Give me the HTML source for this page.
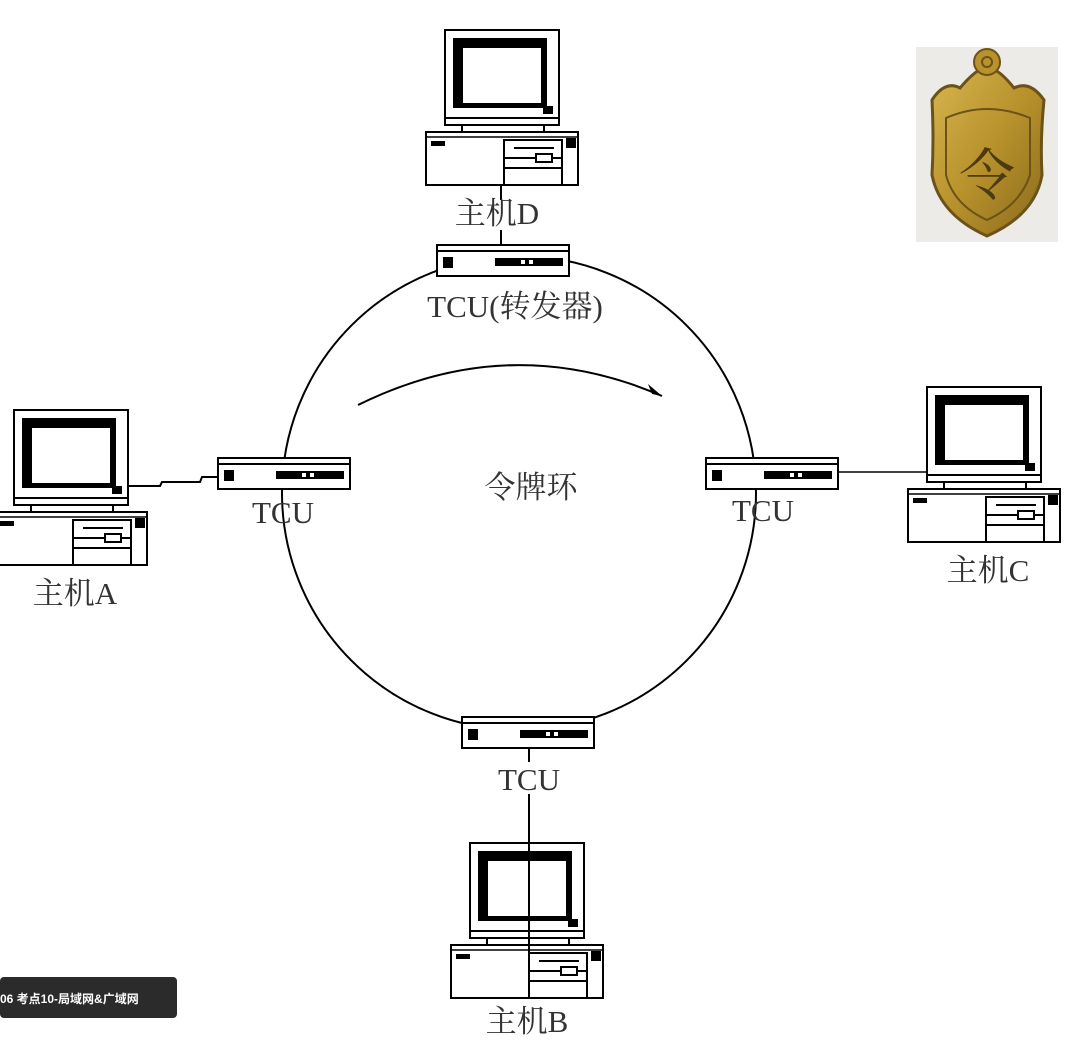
<!DOCTYPE html>
<html><head><meta charset="utf-8"><style>
html,body{margin:0;padding:0;background:#fff;width:1090px;height:1056px;overflow:hidden}
.t{font-family:"Liberation Serif","Noto Serif CJK SC",serif;fill:#333}
</style></head><body>
<svg width="1090" height="1056" viewBox="0 0 1090 1056" xmlns="http://www.w3.org/2000/svg">
<defs>
<linearGradient id="gold" x1="0" y1="0" x2="1" y2="1">
<stop offset="0" stop-color="#d8b650"/><stop offset="0.5" stop-color="#b8922c"/><stop offset="1" stop-color="#8a6a1c"/>
</linearGradient>
<g id="pc" stroke="#000" fill="#fff">
<rect x="19" y="0" width="114" height="88" stroke-width="2"/>
<rect x="27" y="8" width="94" height="70" fill="#000" stroke="none"/>
<rect x="37" y="18" width="78" height="55" fill="#fff" stroke="none"/>
<rect x="117" y="76" width="10" height="8" fill="#000" stroke="none"/>
<rect x="19" y="88" width="114" height="7" stroke-width="2"/>
<line x1="36" y1="95" x2="36" y2="102" stroke-width="2"/>
<line x1="118" y1="95" x2="118" y2="102" stroke-width="2"/>
<rect x="0" y="102" width="152" height="53" stroke-width="2"/>
<line x1="0" y1="107" x2="152" y2="107" stroke-width="1.5"/>
<rect x="5" y="111" width="14" height="5" fill="#000" stroke="none"/>
<rect x="78" y="110" width="58" height="45" stroke-width="2"/>
<line x1="88" y1="118" x2="128" y2="118" stroke-width="2"/>
<line x1="78" y1="128" x2="136" y2="128" stroke-width="2"/>
<rect x="110" y="124" width="16" height="8" stroke-width="2"/>
<line x1="78" y1="138" x2="136" y2="138" stroke-width="2"/>
<rect x="140" y="108" width="10" height="10" fill="#000" stroke="none"/>
</g>
<g id="tcu" stroke="#000" fill="#fff">
<rect x="0" y="0" width="132" height="31" stroke-width="2"/>
<line x1="0" y1="6" x2="132" y2="6" stroke-width="2"/>
<rect x="6" y="12" width="10" height="11" fill="#000" stroke="none"/>
<rect x="58" y="13" width="68" height="8" fill="#000" stroke="none"/>
<rect x="84" y="15" width="4" height="4" fill="#fff" stroke="none"/>
<rect x="92" y="15" width="4" height="4" fill="#fff" stroke="none"/>
</g>
</defs>
<circle cx="519" cy="493" r="237" fill="none" stroke="#000" stroke-width="2"/>
<path d="M358 405 Q510 330 662 396" fill="none" stroke="#000" stroke-width="2"/>
<path d="M662 396 L648 384 L652 394 Z" fill="#000"/>
<line x1="501" y1="185" x2="501" y2="245" stroke="#000" stroke-width="2"/>
<path d="M125 486 L160 486 L162 482 L200 482 L202 477 L230 477" fill="none" stroke="#000" stroke-width="2"/>
<line x1="838" y1="472" x2="930" y2="472" stroke="#000" stroke-width="1.5"/>
<use href="#pc" transform="translate(426,30)"/>
<use href="#pc" transform="translate(908,387)"/>
<use href="#pc" transform="translate(-5,410)"/>
<use href="#pc" transform="translate(451,843)"/>
<use href="#tcu" transform="translate(437,245)"/>
<use href="#tcu" transform="translate(218,458)"/>
<use href="#tcu" transform="translate(706,458)"/>
<use href="#tcu" transform="translate(462,717)"/>
<line x1="529" y1="748" x2="529" y2="995" stroke="#000" stroke-width="2"/>
<rect x="490" y="200" width="22" height="30" fill="#fff"/>
<rect x="500" y="762" width="58" height="32" fill="#fff"/>
<text class="t" x="497" y="224" font-size="31" text-anchor="middle">主机D</text>
<text class="t" x="515" y="317" font-size="31" text-anchor="middle">TCU(转发器)</text>
<text class="t" x="283" y="523" font-size="31" text-anchor="middle">TCU</text>
<text class="t" x="763" y="521" font-size="31" text-anchor="middle">TCU</text>
<text class="t" x="529" y="790" font-size="31" text-anchor="middle">TCU</text>
<text class="t" x="531" y="498" font-size="31" text-anchor="middle">令牌环</text>
<text class="t" x="75" y="604" font-size="31" text-anchor="middle">主机A</text>
<text class="t" x="988" y="581" font-size="31" text-anchor="middle">主机C</text>
<text class="t" x="527" y="1032" font-size="31" text-anchor="middle">主机B</text>
<rect x="916" y="47" width="142" height="195" fill="#ecebe8"/>
<path d="M932 100 Q945 80 960 88 Q975 70 987 66 Q1000 70 1014 88 Q1030 80 1044 100 Q1040 140 1042 175 Q1035 215 987 236 Q940 215 932 175 Q934 140 932 100 Z" fill="url(#gold)" stroke="#6b5218" stroke-width="3"/>
<path d="M946 118 Q987 100 1030 118 L1030 175 Q1020 205 987 220 Q954 205 946 175 Z" fill="none" stroke="#6b5218" stroke-width="2"/>
<circle cx="987" cy="62" r="13" fill="#b8922c" stroke="#6b5218" stroke-width="2"/>
<circle cx="987" cy="62" r="5" fill="none" stroke="#6b5218" stroke-width="2"/>
<text x="987" y="195" font-size="56" text-anchor="middle" fill="#4e3a10" font-family="'Noto Serif CJK SC',serif">令</text>
<rect x="0" y="977" width="177" height="41" rx="4" fill="#2b2b2b"/>
<text x="0" y="1003" font-size="12" font-weight="bold" fill="#fff" font-family="'Liberation Sans','Noto Sans CJK SC',sans-serif">06 考点10-局域网&amp;广域网</text>
</svg>
</body></html>
